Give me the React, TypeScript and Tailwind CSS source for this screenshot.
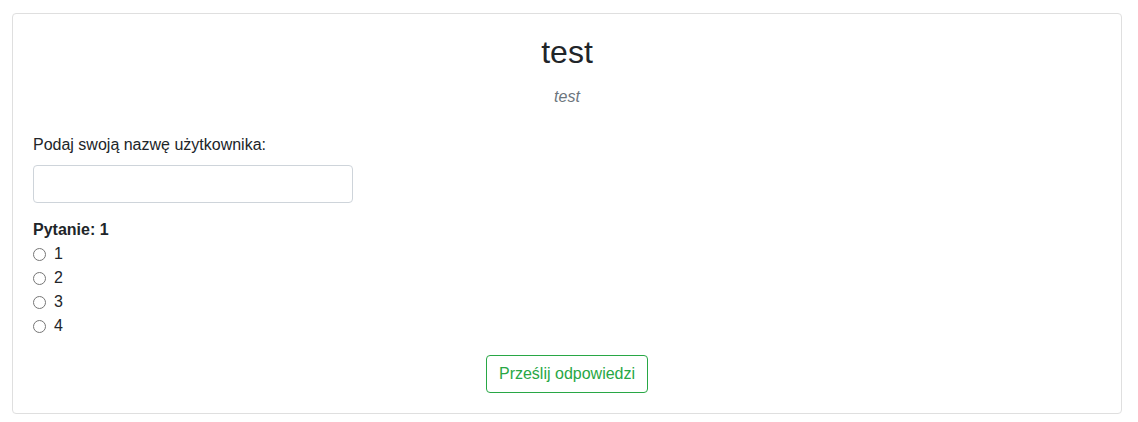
import React from 'react';

const answers = ['1', '2', '3', '4'];

const App: React.FC = () =>
{
    return (
        <div className="bg-white min-h-[422px] pt-[13px] pl-[12px] font-['Liberation_Sans',Arial,sans-serif] text-[#212529]">
            <div className="w-[1110px] border border-[#dfdfdf] rounded-[4px] p-[20px]">
                <h2 className="text-[32px] leading-[38px] text-center mt-[-1px] mb-[14px]">test</h2>
                <p className="text-center italic text-[#6c757d] text-base leading-6 mb-[24px]">test</p>

                <label className="block text-base leading-6 mb-[8px]">Podaj swoją nazwę użytkownika:</label>
                <input type="text" className="block w-[320px] h-[38px] border border-[#ced4da] rounded-[4px] px-3 outline-none" />

                <div className="mt-[15px]">
                    <div className="font-bold text-base leading-6">Pytanie: 1</div>
                    {answers.map((a) => (
                        <label key={a} className="flex items-center text-base leading-6">
                            <input type="radio" name="q1" className="w-[13px] h-[13px] m-0 mr-[8px] accent-[#767676]" />
                            {a}
                        </label>
                    ))}
                </div>

                <div className="flex justify-center mt-[17px]">
                    <button className="h-[38px] px-[12px] border border-[#28a745] rounded-[4px] text-[#28a745] text-base bg-white">
                        Prześlij odpowiedzi
                    </button>
                </div>
            </div>
        </div>
    );
};

export default App;
